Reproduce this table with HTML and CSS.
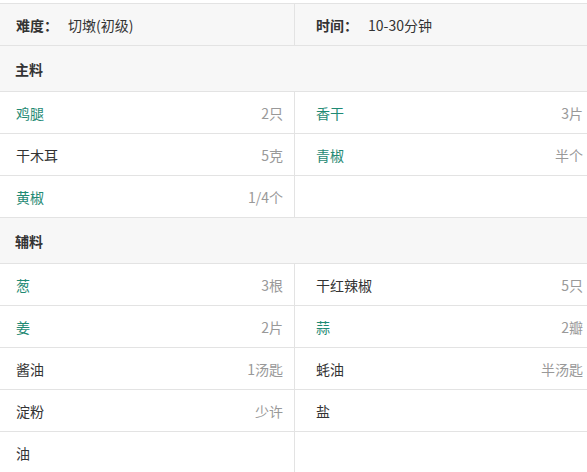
FILE: index.html
```html
<!DOCTYPE html>
<html lang="zh">
<head>
<meta charset="utf-8">
<link rel="stylesheet" href="styles.css">
</head>
<body>
<div class="table">
  <div class="row info">
    <div class="cell"><span class="label">难度：</span><span class="val">切墩(初级)</span></div>
    <div class="cell"><span class="label">时间：</span><span class="val">10-30分钟</span></div>
  </div>
  <div class="row section"><div class="cell full">主料</div></div>
  <div class="row">
    <div class="cell"><span class="name link">鸡腿</span><span class="amt">2只</span></div>
    <div class="cell"><span class="name link">香干</span><span class="amt">3片</span></div>
  </div>
  <div class="row">
    <div class="cell"><span class="name">干木耳</span><span class="amt">5克</span></div>
    <div class="cell"><span class="name link">青椒</span><span class="amt">半个</span></div>
  </div>
  <div class="row">
    <div class="cell"><span class="name link">黄椒</span><span class="amt">1/4个</span></div>
    <div class="cell"></div>
  </div>
  <div class="row section"><div class="cell full">辅料</div></div>
  <div class="row">
    <div class="cell"><span class="name link">葱</span><span class="amt">3根</span></div>
    <div class="cell"><span class="name">干红辣椒</span><span class="amt">5只</span></div>
  </div>
  <div class="row">
    <div class="cell"><span class="name link">姜</span><span class="amt">2片</span></div>
    <div class="cell"><span class="name link">蒜</span><span class="amt">2瓣</span></div>
  </div>
  <div class="row">
    <div class="cell"><span class="name">酱油</span><span class="amt">1汤匙</span></div>
    <div class="cell"><span class="name">蚝油</span><span class="amt">半汤匙</span></div>
  </div>
  <div class="row">
    <div class="cell"><span class="name">淀粉</span><span class="amt">少许</span></div>
    <div class="cell"><span class="name">盐</span><span class="amt"></span></div>
  </div>
  <div class="row">
    <div class="cell"><span class="name">油</span><span class="amt"></span></div>
    <div class="cell"></div>
  </div>
</div>
</body>
</html>
```
FILE: styles.css
```css
html, body {
  margin: 0;
  padding: 0;
  background: #fff;
  overflow: hidden;
}
body {
  font-family: "Noto Sans CJK SC", "Noto Sans", sans-serif;
  font-size: 14px;
  color: #333;
  padding-top: 3px;
}
.table {
  width: 600px;
  margin-left: -6px;
  border-top: 1px solid #e3e3e3;
}
.row {
  display: grid;
  grid-template-columns: 300px 300px;
  height: 42px;
  border-bottom: 1px solid #e3e3e3;
  box-sizing: border-box;
}
.row.info {
  background: #f7f7f7;
}
.row.section {
  height: 46px;
  background: #f7f7f7;
  grid-template-columns: 600px;
  font-weight: bold;
}
.cell {
  display: flex;
  align-items: center;
  justify-content: space-between;
  padding: 0 11px 0 21px;
  border-left: 1px solid #e3e3e3;
  box-sizing: border-box;
}
.cell.full {
  border-left: none;
  padding-left: 21px;
}
.info .cell {
  justify-content: flex-start;
}
.label {
  font-weight: bold;
  width: 52px;
}
.val {
  color: #333;
}
.link {
  color: #1f8a74;
}
.amt {
  color: #999;
}
```
